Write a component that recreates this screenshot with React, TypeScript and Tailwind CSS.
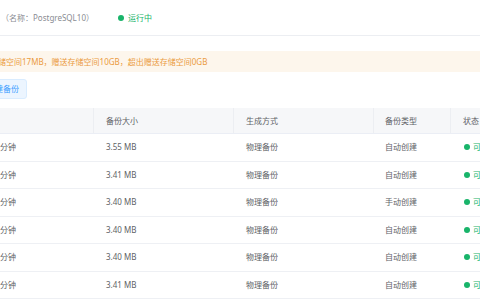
import React from "react";

const rows = [
  { size: "3.55 MB", type: "自动创建" },
  { size: "3.41 MB", type: "自动创建" },
  { size: "3.40 MB", type: "手动创建" },
  { size: "3.40 MB", type: "自动创建" },
  { size: "3.40 MB", type: "自动创建" },
  { size: "3.41 MB", type: "自动创建" },
];

const font = { fontFamily: '"Noto Sans", "Noto Sans CJK SC", sans-serif' };

export default function App() {
  return (
    <div className="h-[300px] w-[480px] overflow-hidden bg-white text-[8px] text-[#606266]" style={font}>
      <div className="flex h-[36px] items-center border-b border-[#eceef2] pl-[1px]">
        <span className="text-[#8a8d93]">（名称：PostgreSQL10）</span>
        <span className="ml-[24px] h-[6px] w-[6px] rounded-full bg-[#19b46a]" />
        <span className="ml-[4px] text-[#19b46a]">运行中</span>
      </div>

      <div className="mt-[15px] flex h-[21px] items-center bg-[#fdf6ec] text-[#eb9b3e]">
        <span className="ml-[-2px] whitespace-nowrap">储空间17MB，赠送存储空间10GB，超出赠送存储空间0GB</span>
      </div>

      <div className="mt-[7px] flex">
        <button className="ml-[-20px] h-[20px] rounded-[3px] border border-[#d9ecff] bg-[#ecf5ff] pl-[6px] pr-[7px] text-[#409eff]">
          创建备份
        </button>
      </div>

      <div className="mt-[9px]">
        <div className="grid h-[26px] grid-cols-[94px_140px_140px_77px_1fr] items-center border-b border-[#ebeef5] bg-[#f6f7f9] text-[#606266]">
          <div className="h-full border-r border-[#eceef2]" />
          <div className="flex h-full items-center border-r border-[#eceef2] pl-[12px]">备份大小</div>
          <div className="flex h-full items-center border-r border-[#eceef2] pl-[12px]">生成方式</div>
          <div className="flex h-full items-center border-r border-[#eceef2] pl-[11px]">备份类型</div>
          <div className="flex h-full items-center whitespace-nowrap pl-[12px]">状态</div>
        </div>
        {rows.map((row, i) => (
          <div
            key={i}
            className="grid h-[27.5px] grid-cols-[94px_140px_140px_77px_1fr] items-center border-b border-[#eef0f4]"
          >
            <div>分钟</div>
            <div className="pl-[12px]">{row.size}</div>
            <div className="pl-[12px]">物理备份</div>
            <div className="pl-[11px]">{row.type}</div>
            <div className="flex items-center whitespace-nowrap pl-[13px] text-[#19b46a]">
              <span className="h-[6px] w-[6px] rounded-full bg-[#19b46a]" />
              <span className="ml-[3px]">可用</span>
            </div>
          </div>
        ))}
      </div>
    </div>
  );
}
